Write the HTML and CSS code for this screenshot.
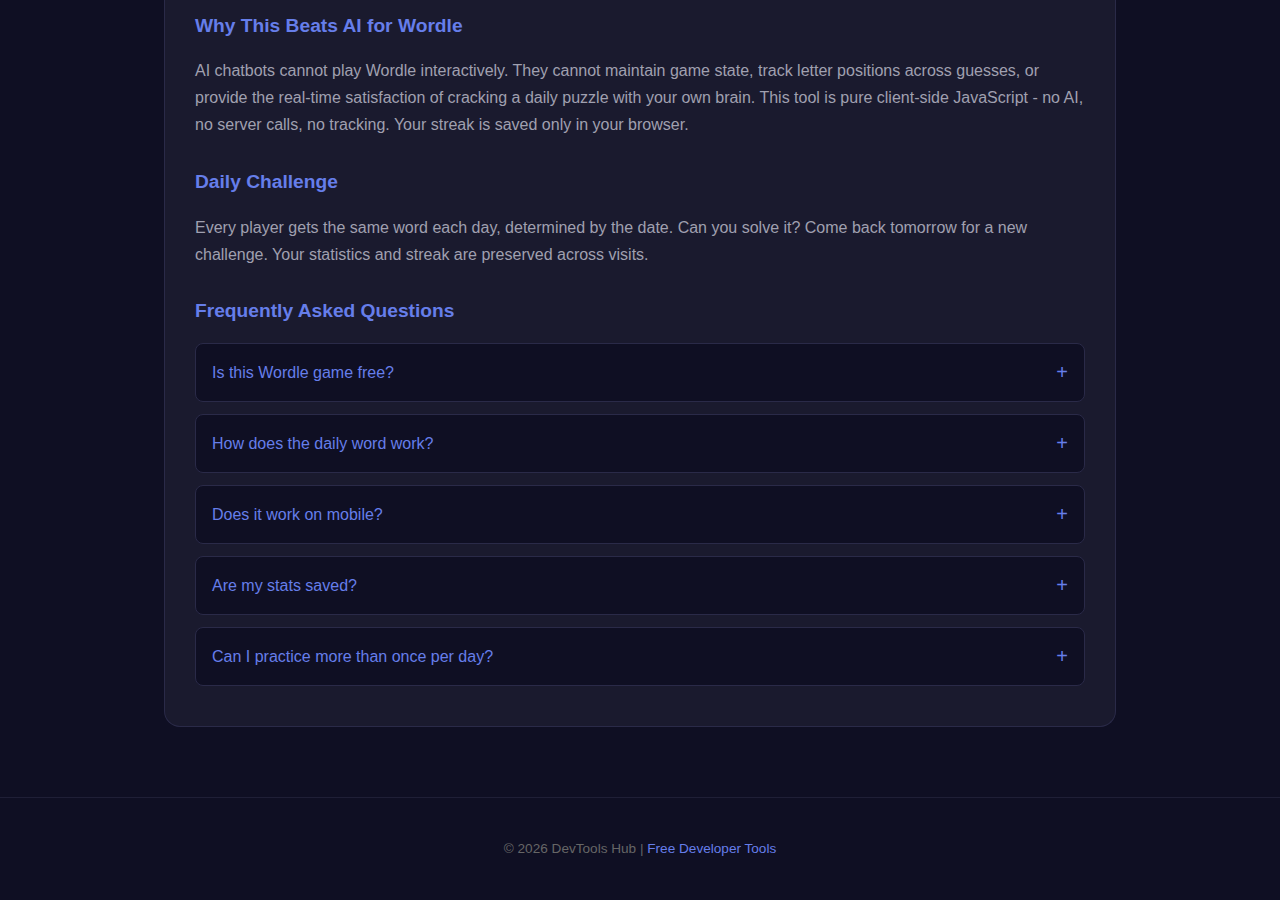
FILE: index.html
```html
<!DOCTYPE html>
<html lang="en">
<head>
  <meta charset="UTF-8">
  <meta name="viewport" content="width=device-width, initial-scale=1.0">
  <title>Wordle - DevTools Hub</title>
  <link rel="stylesheet" href="styles.css">
</head>
<body>
  <main class="page">
    <div class="info-card">
      <h2>Why This Beats AI for Wordle</h2>
      <p>AI chatbots cannot play Wordle interactively. They cannot maintain game state, track letter positions across guesses, or provide the real-time satisfaction of cracking a daily puzzle with your own brain. This tool is pure client-side JavaScript - no AI, no server calls, no tracking. Your streak is saved only in your browser.</p>

      <h2>Daily Challenge</h2>
      <p>Every player gets the same word each day, determined by the date. Can you solve it? Come back tomorrow for a new challenge. Your statistics and streak are preserved across visits.</p>

      <h2>Frequently Asked Questions</h2>
      <div class="faq-list">
        <div class="faq-item">
          <button class="faq-question" onclick="toggleFaq(this)">
            <span>Is this Wordle game free?</span><span class="faq-icon">+</span>
          </button>
          <div class="faq-answer">Yes. It is completely free, with no sign-up and no ads in the way of the game.</div>
        </div>
        <div class="faq-item">
          <button class="faq-question" onclick="toggleFaq(this)">
            <span>How does the daily word work?</span><span class="faq-icon">+</span>
          </button>
          <div class="faq-answer">The word is picked from the current date, so everyone gets the same puzzle each day.</div>
        </div>
        <div class="faq-item">
          <button class="faq-question" onclick="toggleFaq(this)">
            <span>Does it work on mobile?</span><span class="faq-icon">+</span>
          </button>
          <div class="faq-answer">Yes. The on-screen keyboard works on phones and tablets.</div>
        </div>
        <div class="faq-item">
          <button class="faq-question" onclick="toggleFaq(this)">
            <span>Are my stats saved?</span><span class="faq-icon">+</span>
          </button>
          <div class="faq-answer">Your stats and streak are kept in your browser's local storage.</div>
        </div>
        <div class="faq-item">
          <button class="faq-question" onclick="toggleFaq(this)">
            <span>Can I practice more than once per day?</span><span class="faq-icon">+</span>
          </button>
          <div class="faq-answer">Practice mode gives you a random word as often as you like.</div>
        </div>
      </div>
    </div>
  </main>

  <footer class="site-footer">
    &copy; 2026 DevTools Hub | <a href="/">Free Developer Tools</a>
  </footer>

  <script>
    function toggleFaq(btn) {
      const item = btn.parentElement;
      item.classList.toggle('open');
      btn.querySelector('.faq-icon').textContent = item.classList.contains('open') ? '\u2212' : '+';
    }
  </script>
</body>
</html>
```

FILE: styles.css
```css
* {
  box-sizing: border-box;
}

body {
  margin: 0;
  background-color: #0f0f23;
  font-family: "Liberation Sans", Arial, sans-serif;
  color: #a0a0b0;
}

.page {
  padding: 0 20px 70px;
}

.info-card {
  max-width: 952px;
  margin: 0 auto;
  background-color: #1a1a2e;
  border: 1px solid #2a2a48;
  border-top: none;
  border-radius: 0 0 16px 16px;
  padding: 14px 30px 30px;
}

.info-card h2 {
  color: #667eea;
  font-size: 19.2px;
  line-height: 23px;
  margin: 31px 0 21px;
}

.info-card h2:first-child {
  margin-top: 0;
  margin-bottom: 20px;
}

.info-card p {
  font-size: 16px;
  line-height: 1.7;
  margin: 0;
}

.faq-list {
  display: flex;
  flex-direction: column;
  gap: 12px;
  margin-bottom: 10px;
}

.faq-item {
  background-color: #0f0f23;
  border: 1px solid #2a2a48;
  border-radius: 8px;
}

.faq-question {
  width: 100%;
  display: flex;
  justify-content: space-between;
  align-items: center;
  background: none;
  border: none;
  padding: 18px 16px;
  font-family: inherit;
  font-size: 16px;
  line-height: 21px;
  color: #667eea;
  text-align: left;
  cursor: pointer;
}

.faq-icon {
  font-size: 20px;
}

.faq-answer {
  display: none;
  padding: 0 16px 18px;
  font-size: 15px;
  line-height: 1.6;
}

.faq-item.open .faq-answer {
  display: block;
}

.site-footer {
  border-top: 1px solid #1f1f36;
  padding: 43px 20px 43px;
  text-align: center;
  font-size: 13.6px;
  line-height: 16px;
  color: #666;
}

.site-footer a {
  color: #667eea;
  text-decoration: none;
}
```
